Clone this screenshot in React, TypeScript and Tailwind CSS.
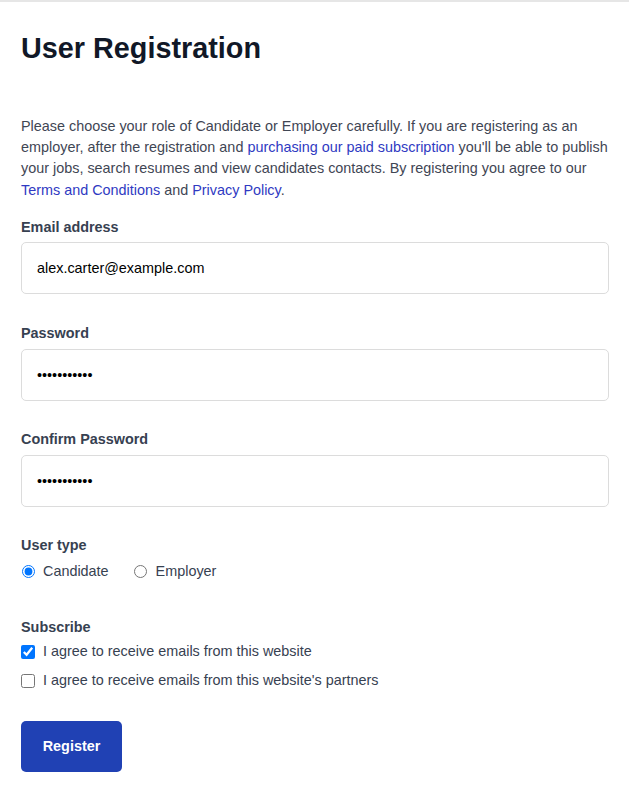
import { useState } from "react";

const font = { fontFamily: '"Liberation Sans", Arial, sans-serif' };

function Field({ label, type, value }: { label: string; type: string; value: string }) {
  return (
    <div className="flex flex-col">
      <label className="text-[14.4px] leading-[21.6px] font-bold text-[#374151] mb-[4px]">{label}</label>
      <input
        type={type}
        defaultValue={value}
        className="w-full h-[52px] px-[15px] border border-[#dcdcdc] rounded-[5px] text-[14.4px] text-black outline-none"
        style={font}
      />
    </div>
  );
}

export default function App() {
  const [role, setRole] = useState("candidate");

  return (
    <div className="min-h-screen bg-white border-t-2 border-[#e6e6e6]" style={font}>
      <div className="px-[21px] pr-[20px] pb-8">
        <h1 className="pt-[29px] text-[28.8px] leading-[35px] font-bold text-[#111827]">User Registration</h1>

        <p className="mt-[50px] text-[14.4px] leading-[21.2px] text-[#3f4654]">
          Please choose your role of Candidate or Employer carefully. If you are registering as an employer, after the
          registration and <a href="#" className="text-[#2f3ac2]">purchasing our paid subscription</a> you'll be able
          to publish your jobs, search resumes and view candidates contacts. By registering you agree to our{" "}
          <a href="#" className="text-[#2f3ac2]">Terms and Conditions</a> and{" "}
          <a href="#" className="text-[#2f3ac2]">Privacy Policy</a>.
        </p>

        <form className="mt-[16px] flex flex-col gap-[28.5px]" onSubmit={(e) => e.preventDefault()}>
          <Field label="Email address" type="email" value="alex.carter@example.com" />
          <Field label="Password" type="password" value="secretpass1" />
          <Field label="Confirm Password" type="password" value="secretpass1" />

          <div className="flex flex-col">
            <span className="text-[14.4px] leading-[21.6px] font-bold text-[#374151]">User type</span>
            <div className="mt-[4px] flex items-center gap-[25px] text-[14.4px] leading-[21.6px] text-[#374151]">
              <label className="flex items-center gap-[8px]">
                <input
                  type="radio"
                  name="role"
                  checked={role === "candidate"}
                  onChange={() => setRole("candidate")}
                  className="m-0 ml-[1px] w-[13px] h-[13px]"
                />
                Candidate
              </label>
              <label className="flex items-center gap-[9px]">
                <input
                  type="radio"
                  name="role"
                  checked={role === "employer"}
                  onChange={() => setRole("employer")}
                  className="m-0 w-[13px] h-[13px]"
                />
                Employer
              </label>
            </div>
          </div>

          <div className="mt-[6px] flex flex-col">
            <span className="text-[14.4px] leading-[21.6px] font-bold text-[#374151]">Subscribe</span>
            <div className="mt-[3px] flex flex-col gap-[7px] text-[14.4px] leading-[21.6px] text-[#374151]">
              <label className="flex items-center gap-[8px]">
                <input type="checkbox" defaultChecked className="m-0 w-[14px] h-[14px]" />
                I agree to receive emails from this website
              </label>
              <label className="flex items-center gap-[8px]">
                <input type="checkbox" className="m-0 w-[14px] h-[14px]" />
                I agree to receive emails from this website's partners
              </label>
            </div>
          </div>

          <div className="mt-[1px]">
            <button
              type="submit"
              className="w-[101px] h-[51px] rounded-[5px] bg-[#2041b4] text-white text-[14.4px] font-bold"
              style={font}
            >
              Register
            </button>
          </div>
        </form>
      </div>
    </div>
  );
}
